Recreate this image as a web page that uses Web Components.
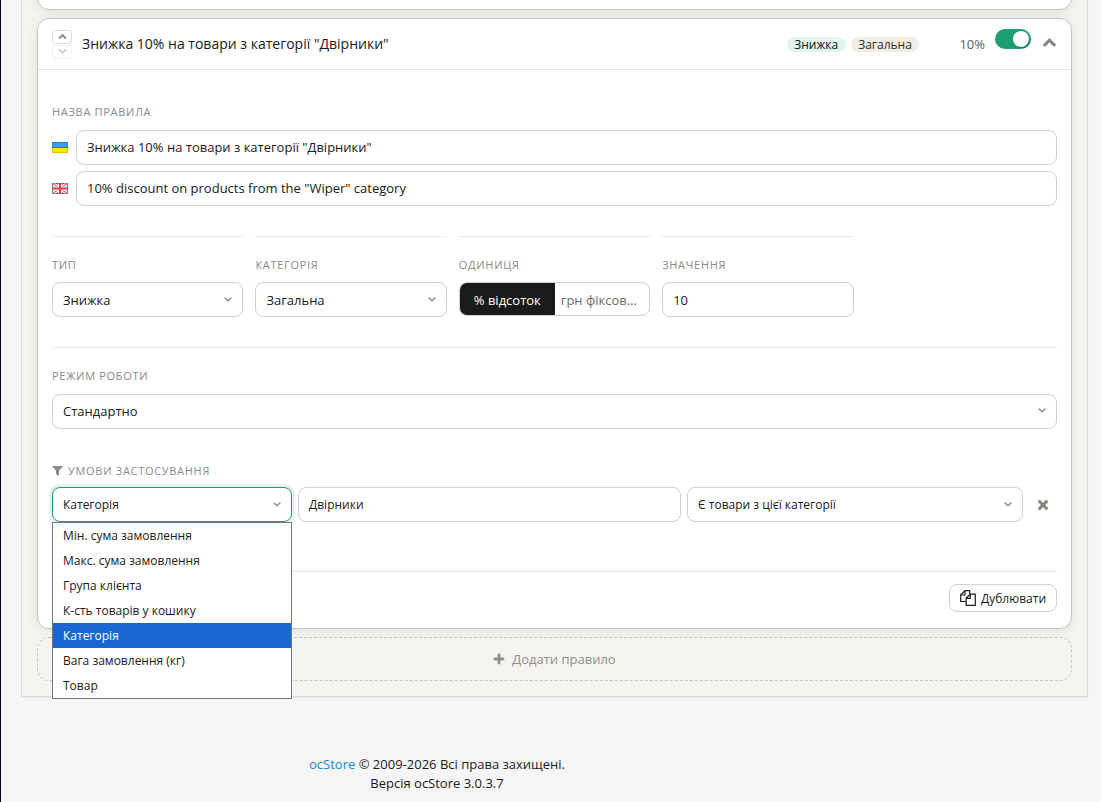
<!DOCTYPE html>
<html lang="uk">
<head>
<meta charset="utf-8">
<title>ocStore</title>
<style>
  html {
    height: 100%;
    overflow: hidden;
  }

  body {
    margin: 0;
    height: 100%;
    box-sizing: border-box;
    overflow: hidden;
    border-left: 1px solid #0b0420;
    background: #f6f6f6;
    color: #1a1a18;
    font-family: "Open Sans", "Noto Sans", sans-serif;
    font-size: 13px;
  }
</style>
</head>
<body>
<rules-page></rules-page>

<script>
const define = (name, html) => {
  customElements.define(name, class extends HTMLElement {
    connectedCallback() {
      if (this.shadowRoot) return;
      this.attachShadow({ mode: 'open' });
      this.shadowRoot.innerHTML = html;
    }
  });
};

const ICONS = {
  up: ['0 0 16 16', '<path d="M2 11.5 8 5.5l6 6" fill="none" stroke="currentColor" stroke-width="3.4"/>'],
  down: ['0 0 16 16', '<path d="M2 4.5 8 10.5l6-6" fill="none" stroke="currentColor" stroke-width="3.4"/>'],
  caret: ['0 0 8 5', '<path d="M1 1 4 3.8 7 1" fill="none" stroke="currentColor" stroke-width="1.3" stroke-linecap="round" stroke-linejoin="round"/>'],
  filter: ['0 0 12 12', '<path d="M.6 1h10.8q.5.3.2.8L7.6 6v5.3q-.2.5-.8.3L4.6 9.8q-.2-.2-.2-.5V6L.4 1.8Q.2 1.3.6 1z" fill="currentColor"/>'],
  times: ['0 0 12 12', '<path d="M2.8 2.8l6.4 6.4M9.2 2.8l-6.4 6.4" stroke="currentColor" stroke-width="3.1" stroke-linecap="square"/>'],
  plus: ['0 0 12 12', '<path d="M6 2v8M2 6h8" stroke="currentColor" stroke-width="2.8" stroke-linecap="round"/>'],
  copy: ['0 0 16 16', '<g fill="none" stroke="currentColor" stroke-width="1.2" stroke-linejoin="round"><path d="M6.1 11.5H.7V5L4.9.7h4.8v3.5"/><path d="M.7 5h4.2V.7"/><path d="M6.1 8.3V15.3h9.2V4.2h-5L6.1 8.3h4.2V4.2"/></g>']
};

class UiIcon extends HTMLElement {
  connectedCallback() {
    const [box, shape] = ICONS[this.getAttribute('name')];
    this.attachShadow({ mode: 'open' });
    this.shadowRoot.innerHTML = `
      <style>
        :host { display: block; flex: none; width: 12px; height: 12px; }
        svg { display: block; width: 100%; height: 100%; }
      </style>
      <svg viewBox="${box}" aria-hidden="true">${shape}</svg>
    `;
  }
}
customElements.define('ui-icon', UiIcon);

class FlagIcon extends HTMLElement {
  connectedCallback() {
    const flags = {
      ua: `
        <rect width="16" height="11" rx="1" fill="#1878dc"/>
        <rect x="1" y="1" width="14" height="4" fill="#3b9cf4"/>
        <path d="M0 6h16v4q0 1-1 1H1q-1 0-1-1z" fill="#e8c400"/>
        <rect x="1" y="6" width="14" height="4" fill="#ffe800"/>`,
      gb: `
        <rect width="16" height="11" rx="1" fill="#5a70bc"/>
        <path d="M0 0l16 11M16 0L0 11" stroke="#fff" stroke-width="3.4"/>
        <path d="M0 0l16 11M16 0L0 11" stroke="#e2606c" stroke-width="1.1"/>
        <path d="M8 0v11M0 5.5h16" stroke="#fff" stroke-width="4"/>
        <path d="M8 0v11M0 5.5h16" stroke="#ee3a3a" stroke-width="2"/>
        <path d="M.5.5h15v10H.5z" fill="none" stroke="#1f2d68" stroke-opacity=".4"/>`
    };
    this.attachShadow({ mode: 'open' });
    this.shadowRoot.innerHTML = `
      <style>
        :host { display: block; flex: none; width: 16px; height: 11px; }
        svg { display: block; }
      </style>
      <svg width="16" height="11" viewBox="0 0 16 11">${flags[this.getAttribute('code')]}</svg>
    `;
  }
}
customElements.define('flag-icon', FlagIcon);

define('field-label', `
  <style>
    :host {
      display: flex;
      align-items: center;
      gap: 5px;
      height: 16px;
      color: #8a8a83;
      font-size: 11px;
      font-weight: 500;
      letter-spacing: 0.7px;
      text-transform: uppercase;
      white-space: nowrap;
    }
  </style>
  <slot></slot>
`);

define('text-field', `
  <style>
    :host {
      display: flex;
      align-items: center;
      box-sizing: border-box;
      min-width: 0;
      height: 35px;
      padding: 0 10px;
      border: 1px solid #d0d0d0;
      border-radius: 8px;
      background: #fff;
      white-space: nowrap;
    }
  </style>
  <slot></slot>
`);

define('select-field', `
  <style>
    :host {
      display: flex;
      align-items: center;
      justify-content: space-between;
      position: relative;
      box-sizing: border-box;
      min-width: 0;
      height: 35px;
      padding: 0 10px;
      border: 1px solid #d0d0d0;
      border-radius: 8px;
      background: #fff;
      white-space: nowrap;
    }
    :host([open]) {
      border-color: #1d9e75;
      box-shadow: 0 0 0 3px rgba(29, 158, 117, 0.12);
    }
    ui-icon {
      width: 8px;
      height: 5px;
      color: #888780;
    }
  </style>
  <slot></slot>
  <ui-icon name="caret"></ui-icon>
  <slot name="menu"></slot>
`);

define('option-menu', `
  <style>
    :host {
      display: block;
      position: absolute;
      z-index: 5;
      top: 34px;
      left: -1px;
      right: -1px;
      border: 1px solid #767676;
      background: #fff;
    }
    ::slotted(div) {
      height: 25px;
      padding-left: 10px;
      line-height: 25px;
    }
    ::slotted(.selected) {
      background: #1967d2;
      color: #fff;
    }
  </style>
  <slot></slot>
`);

define('unit-switch', `
  <style>
    :host {
      display: grid;
      grid-template-columns: 95px 1fr;
      box-sizing: border-box;
      height: 34px;
      overflow: hidden;
      border: 1px solid #d0d0d0;
      border-radius: 8px;
    }
    span {
      overflow: hidden;
      padding: 0 6px;
      color: #6b6b66;
      line-height: 34px;
      text-align: center;
      text-overflow: ellipsis;
      white-space: nowrap;
    }
    .on {
      background: #1a1a18;
      color: #fff;
    }
  </style>
  <span class="on">% відсоток</span>
  <span>грн фіксована</span>
`);

define('rule-tag', `
  <style>
    :host {
      display: block;
      height: 15px;
      padding: 0 7.5px;
      border-radius: 8px;
      background: #f1ece6;
      color: #2c2c2a;
      font-size: 12px;
      line-height: 16px;
      font-weight: 500;
    }
    :host([kind="discount"]) {
      background: #e1f5ee;
      color: #04201a;
    }
  </style>
  <slot></slot>
`);

define('toggle-switch', `
  <style>
    :host {
      display: flex;
      justify-content: flex-end;
      box-sizing: border-box;
      width: 36px;
      height: 20px;
      padding: 2px;
      border-radius: 10px;
      background: #1d9e75;
    }
    i {
      width: 16px;
      height: 16px;
      border-radius: 50%;
      background: #fff;
      box-shadow: 1px 1px 1px #087a4b;
    }
  </style>
  <i></i>
`);

define('order-buttons', `
  <style>
    :host {
      display: grid;
      gap: 1px;
    }
    span {
      display: flex;
      align-items: center;
      justify-content: center;
      box-sizing: border-box;
      width: 20px;
      height: 14px;
      border: 1px solid #dcdcd9;
      border-radius: 3px;
      color: #888780;
    }
    .off { opacity: 0.4; }
    ui-icon { width: 9px; height: 9px; }
  </style>
  <span><ui-icon name="up"></ui-icon></span>
  <span class="off"><ui-icon name="down"></ui-icon></span>
`);

define('rule-header', `
  <style>
    :host {
      display: flex;
      align-items: center;
      box-sizing: border-box;
      height: 51px;
      padding: 0 14px;
      border-bottom: 1px solid #e3e3e3;
    }
    .title {
      flex: 1;
      padding: 0 0 2px 10px;
      font-size: 14px;
    }
    .tags {
      display: flex;
      gap: 5px;
      margin-right: 40px;
      padding-top: 1px;
    }
    .value {
      margin-right: 10px;
      padding-bottom: 1px;
      color: #5f5e5a;
      font-weight: 500;
    }
    toggle-switch {
      margin: 0 11px 10px 0;
    }
    .fold {
      width: 15px;
      height: 15px;
      margin-top: -3px;
      color: #888780;
    }
  </style>
  <order-buttons></order-buttons>
  <div class="title"><slot></slot></div>
  <div class="tags"><slot name="tags"></slot></div>
  <div class="value"><slot name="value"></slot></div>
  <toggle-switch></toggle-switch>
  <ui-icon class="fold" name="up"></ui-icon>
`);

define('rule-card', `
  <style>
    :host {
      display: block;
      box-sizing: border-box;
      border: 1px solid #c4c4c2;
      border-radius: 12px;
      background: #fff;
      box-shadow: 0 2px 12px rgba(0, 0, 0, 0.08);
    }
  </style>
  <slot></slot>
`);

define('rule-form', `
  <style>
    :host {
      display: block;
      padding: 33px 14px 16px;
    }
    .names {
      display: grid;
      grid-template-columns: 16px 1fr;
      align-items: center;
      gap: 6px 8px;
      margin: 11px 0 30px;
    }
    .names text-field, .mode select-field { padding-bottom: 2px; }
    .params {
      display: grid;
      grid-template-columns: repeat(5, 1fr);
      gap: 12px;
      height: 111px;
    }
    .params > div, .mode {
      border-top: 1px solid #ebebeb;
      padding-top: 19px;
    }
    .params field-label { margin-bottom: 10px; }
    .mode field-label { margin-bottom: 11px; }
    .cond-label { margin-top: 33px; }
    .cond-label ui-icon { width: 11px; height: 11px; }
    .cond {
      display: grid;
      grid-template-columns: 240px 383px 336px 28px;
      gap: 6px;
      margin-top: 9px;
      font-size: 12px;
    }
    .remove {
      display: flex;
      align-items: center;
      justify-content: center;
      padding-top: 1px;
      color: #888780;
    }
    .remove ui-icon { width: 12px; height: 12px; }
    .actions {
      display: flex;
      justify-content: flex-end;
      margin-top: 49px;
      padding-top: 12px;
      border-top: 1px solid #e3e3e3;
    }
    .copy {
      display: flex;
      align-items: center;
      gap: 5px;
      box-sizing: border-box;
      width: 108px;
      height: 28px;
      padding-left: 10px;
      border: 1px solid #d0d0d0;
      border-radius: 8px;
      font-size: 12px;
      white-space: nowrap;
    }
    .copy ui-icon { width: 16px; height: 16px; }
  </style>
  <field-label>Назва правила</field-label>
  <div class="names">
    <flag-icon code="ua"></flag-icon>
    <text-field>Знижка 10% на товари з категорії "Двірники"</text-field>
    <flag-icon code="gb"></flag-icon>
    <text-field>10% discount on products from the "Wiper" category</text-field>
  </div>
  <div class="params">
    <div>
      <field-label>Тип</field-label>
      <select-field>Знижка</select-field>
    </div>
    <div>
      <field-label>Категорія</field-label>
      <select-field>Загальна</select-field>
    </div>
    <div>
      <field-label>Одиниця</field-label>
      <unit-switch></unit-switch>
    </div>
    <div>
      <field-label>Значення</field-label>
      <text-field>10</text-field>
    </div>
  </div>
  <div class="mode">
    <field-label>Режим роботи</field-label>
    <select-field>Стандартно</select-field>
  </div>
  <field-label class="cond-label"><ui-icon name="filter"></ui-icon>Умови застосування</field-label>
  <div class="cond">
    <select-field open>Категорія
      <option-menu slot="menu">
        <div>Мін. сума замовлення</div>
        <div>Макс. сума замовлення</div>
        <div>Група клієнта</div>
        <div>К-сть товарів у кошику</div>
        <div class="selected">Категорія</div>
        <div>Вага замовлення (кг)</div>
        <div>Товар</div>
      </option-menu>
    </select-field>
    <text-field>Двірники</text-field>
    <select-field>Є товари з цієї категорії</select-field>
    <span class="remove"><ui-icon name="times"></ui-icon></span>
  </div>
  <div class="actions">
    <span class="copy"><ui-icon name="copy"></ui-icon>Дублювати</span>
  </div>
`);

define('add-rule', `
  <style>
    :host {
      display: flex;
      align-items: center;
      justify-content: center;
      gap: 7px;
      box-sizing: border-box;
      height: 44px;
      border: 1px dashed #c4c4c2;
      border-radius: 12px;
      color: #8f8f88;
      font-size: 13px;
    }
  </style>
  <ui-icon name="plus"></ui-icon><slot></slot>
`);

define('page-footer', `
  <style>
    :host {
      display: block;
      width: 872px;
      margin-top: 58px;
      line-height: 19px;
      text-align: center;
    }
    a { color: #1588cb; }
  </style>
  <a>ocStore</a> © 2009-2026 Всі права захищені.<br>Версія ocStore 3.0.3.7
`);

define('rules-page', `
  <style>
    :host { display: block; }
    .panel {
      display: grid;
      gap: 8px;
      box-sizing: border-box;
      width: 1067px;
      height: 697px;
      margin-left: 20px;
      padding: 0 15px 15px;
      border: solid #dcdcdc;
      border-width: 0 1px 1px;
      background: #f5f4f0;
      box-shadow: 0 1px 1px rgba(0, 0, 0, 0.05);
      grid-template-rows: 10px 611px 44px;
    }
    /* tail of the rule scrolled above the window */
    .previous {
      height: 40px;
      align-self: end;
    }
    .current { position: relative; }
  </style>
  <div class="panel">
    <rule-card class="previous"></rule-card>
    <rule-card class="current">
      <rule-header>
        Знижка 10% на товари з категорії "Двірники"
        <rule-tag slot="tags" kind="discount">Знижка</rule-tag>
        <rule-tag slot="tags">Загальна</rule-tag>
        <span slot="value">10%</span>
      </rule-header>
      <rule-form></rule-form>
    </rule-card>
    <add-rule>Додати правило</add-rule>
  </div>
  <page-footer></page-footer>
`);
</script>
</body>
</html>
